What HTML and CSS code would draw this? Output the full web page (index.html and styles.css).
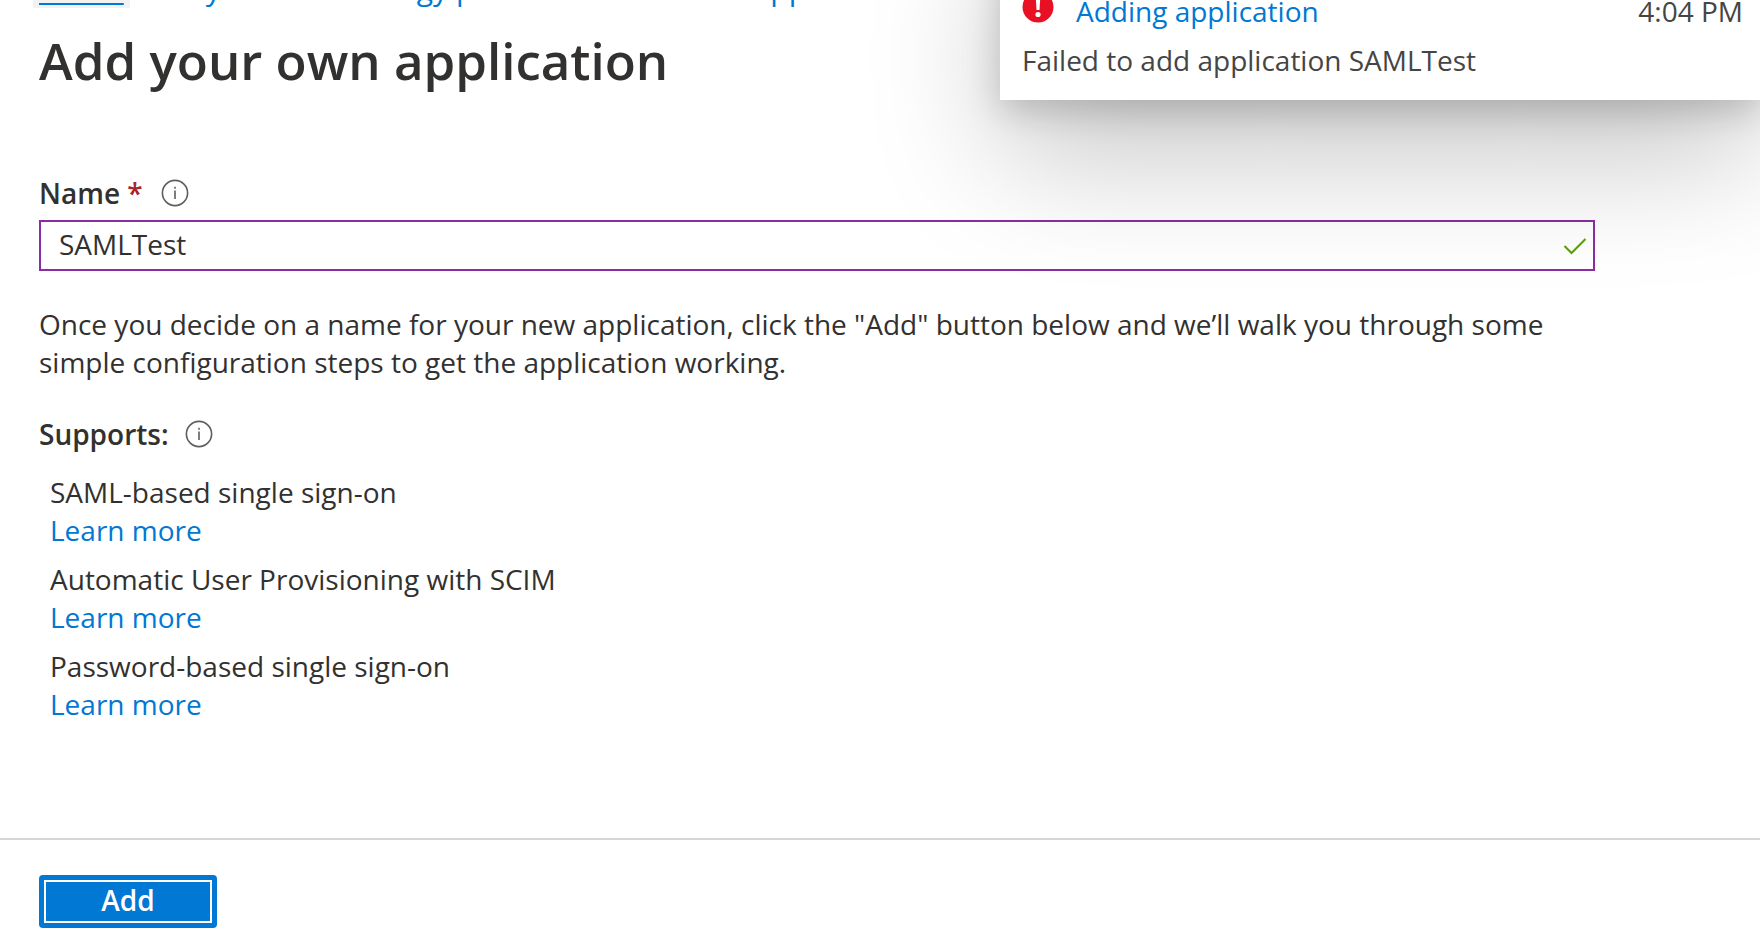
FILE: index.html
```
<!DOCTYPE html>
<html lang="en">
<head>
<meta charset="utf-8">
<title>Add your own application</title>
<link rel="stylesheet" href="styles.css">
</head>
<body>
<div class="blade">
  <nav class="breadcrumb" aria-label="Breadcrumb">
    <a class="crumb crumb-home" href="#">Home</a>
    <a class="crumb crumb-org" href="#">y</a>
    <a class="crumb crumb-dir" href="#">gy p</a>
    <a class="crumb crumb-apps" href="#">pp</a>
  </nav>
  <main class="content">
    <h1 class="title">Add your own application</h1>
    <form class="form">
      <div class="label-row">
        <label class="label" for="name">Name <span class="required">*</span></label>
        <svg class="info" viewBox="0 0 28 28" aria-hidden="true"><circle cx="14" cy="14" r="12.6"/><path d="M14 11.5v8.5M14 7.7v2"/></svg>
      </div>
      <div class="field">
        <input class="input" id="name" type="text" value="SAMLTest">
        <svg class="check" viewBox="0 0 24 18" aria-hidden="true"><path d="M1.5 9l7 7L22.5 2"/></svg>
      </div>
    </form>
    <p class="text">Once you decide on a name for your new application, click the "Add" button below and we’ll walk you through some simple configuration steps to get the application working.</p>
    <div class="label-row supports">
      <h2 class="label">Supports:</h2>
      <svg class="info" viewBox="0 0 28 28" aria-hidden="true"><circle cx="14" cy="14" r="12.6"/><path d="M14 11.5v8.5M14 7.7v2"/></svg>
    </div>
    <ul class="list">
      <li class="item">SAML-based single sign-on<a class="link" href="#">Learn more</a></li>
      <li class="item">Automatic User Provisioning with SCIM<a class="link" href="#">Learn more</a></li>
      <li class="item">Password-based single sign-on<a class="link" href="#">Learn more</a></li>
    </ul>
  </main>
  <footer class="footer"><button class="add" type="button">Add</button></footer>
</div>
<aside class="toast" role="alert">
  <div class="toast-head">
    <svg class="error" viewBox="0 0 32 32" aria-hidden="true"><circle cx="16" cy="16" r="15.5"/><path d="M13.6 5h4.8l-.9 14h-3z"/><circle class="dot" cx="16" cy="23.5" r="2.6"/></svg>
    <a class="toast-title" href="#">Adding application</a>
    <time class="time">4:04 PM</time>
  </div>
  <p class="toast-body">Failed to add application SAMLTest</p>
</aside>
</body>
</html>
```
FILE: styles.css
```
* { box-sizing: border-box; }

body {
  margin: 0;
  background: #fff;
  color: #323130;
  font-family: "Segoe UI", "Open Sans", "Noto Sans", sans-serif;
  font-size: 28px;
  line-height: 38px;
  overflow: hidden;
}

a { color: #0078d4; text-decoration: none; }
h1, h2, p, ul { margin: 0; padding: 0; }

.blade { display: flex; flex-direction: column; min-height: 100vh; }

.breadcrumb {
  display: flex;
  margin-top: -30px;
  padding-left: 33px;
  height: 38px;
  font-size: 30px;
}
.crumb-home {
  padding: 0 6px;
  background: #f2f2f2;
  text-decoration: underline;
  text-decoration-thickness: 2px;
  text-underline-offset: 3px;
}
.crumb-org { margin-left: 76px; }
.crumb-dir { margin-left: 196px; }
.crumb-apps { margin-left: 296px; }

.content { flex: 1; padding: 16px 165px 0 39px; }
.title { font-size: 51px; line-height: 72px; font-weight: 600; }
.form { margin-top: 78px; }
.label-row { display: flex; align-items: center; gap: 18px; }
.label { font-size: 28px; line-height: 38px; font-weight: 600; }
.required { color: #a4262c; }
.info { width: 28px; height: 28px; fill: none; stroke: #605e5c; stroke-width: 1.6; }

.field { position: relative; margin-top: 8px; }
.input {
  display: block;
  width: 100%;
  height: 51px;
  padding: 0 48px 4px 18px;
  border: 2px solid #8a2da5;
  border-radius: 0;
  outline: none;
  background: transparent;
  color: inherit;
  font: inherit;
}
.check {
  position: absolute;
  right: 8px;
  top: 17px;
  width: 24px;
  height: 18px;
  fill: none;
  stroke: #57a300;
  stroke-width: 2;
}

.text { margin-top: 34px; }
.supports { margin-top: 34px; gap: 16px; }
.list { margin-top: 20px; padding-left: 11px; list-style: none; }
.item { margin-bottom: 11px; }
.link { display: block; width: fit-content; }

.footer { padding: 35px 39px 6px; border-top: 2px solid #d6d6d6; }
.add {
  display: block;
  width: 178px;
  height: 53px;
  padding: 0 0 3px;
  border: 0;
  border-radius: 4px;
  outline: 2px solid #fff;
  outline-offset: -7px;
  background: #0078d4;
  color: #fff;
  font: inherit;
  font-weight: 600;
}

.toast {
  position: absolute;
  top: -100px;
  right: 0;
  width: 760px;
  padding: 91px 17px 21px 22px;
  background: #fff;
  color: #454545;
  box-shadow: 0 58px 130px rgba(0, 0, 0, .22), 0 11px 32px rgba(0, 0, 0, .18);
}
.toast-head { display: flex; align-items: center; gap: 22px; }
.error { width: 32px; height: 32px; margin-bottom: 8px; fill: #e81123; }
.error path, .error .dot { fill: #fff; }
.time { margin-left: auto; }
.toast-body { margin-top: 10px; }
```
